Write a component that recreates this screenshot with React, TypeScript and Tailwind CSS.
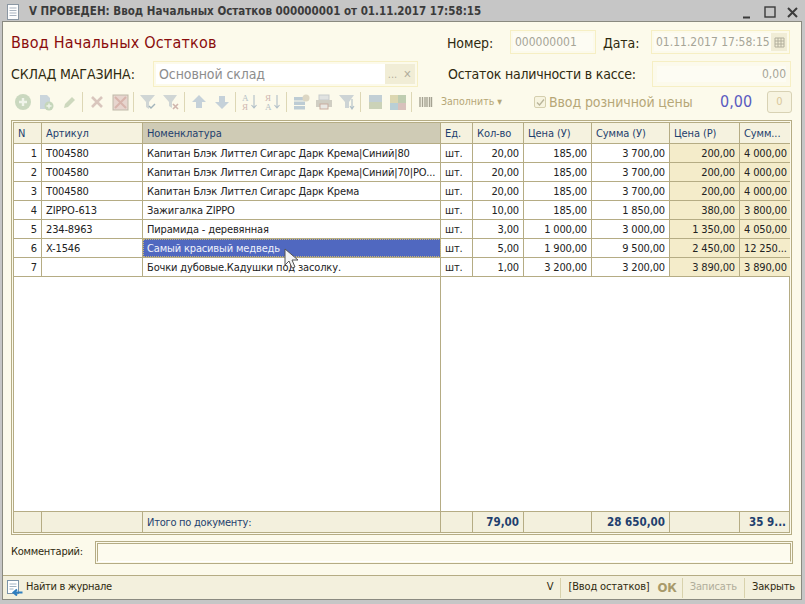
import React from "react";

const font = { fontFamily: '"DejaVu Sans Condensed", "DejaVu Sans", sans-serif' };

const cols = [
  { w: "w-[28px]", name: "N", align: "text-right" },
  { w: "w-[101px]", name: "Артикул", align: "text-left" },
  { w: "w-[298px]", name: "Номенклатура", align: "text-left" },
  { w: "w-[32px]", name: "Ед.", align: "text-left" },
  { w: "w-[51px]", name: "Кол-во", align: "text-right" },
  { w: "w-[68px]", name: "Цена (У)", align: "text-right" },
  { w: "w-[78px]", name: "Сумма (У)", align: "text-right" },
  { w: "w-[70px]", name: "Цена (Р)", align: "text-right" },
  { w: "w-[50px]", name: "Сумм...", align: "text-right" },
];

const rows = [
  ["1", "T004580", "Капитан Блэк Литтел Сигарс Дарк Крема|Синий|80", "шт.", "20,00", "185,00", "3 700,00", "200,00", "4 000,00"],
  ["2", "T004580", "Капитан Блэк Литтел Сигарс Дарк Крема|Синий|70|РО...", "шт.", "20,00", "185,00", "3 700,00", "200,00", "4 000,00"],
  ["3", "T004580", "Капитан Блэк Литтел Сигарс Дарк Крема", "шт.", "20,00", "185,00", "3 700,00", "200,00", "4 000,00"],
  ["4", "ZIPPO-613", "Зажигалка ZIPPO", "шт.", "10,00", "185,00", "1 850,00", "380,00", "3 800,00"],
  ["5", "234-8963", "Пирамида - деревянная", "шт.", "3,00", "1 000,00", "3 000,00", "1 350,00", "4 050,00"],
  ["6", "X-1546", "Самый красивый медведь", "шт.", "5,00", "1 900,00", "9 500,00", "2 450,00", "12 250..."],
  ["7", "", "Бочки дубовые.Кадушки под засолку.", "шт.", "1,00", "3 200,00", "3 200,00", "3 890,00", "3 890,00"],
];

const totals = ["", "", "Итого по документу:", "", "79,00", "", "28 650,00", "", "35 9..."];

const Sep = () => <div className="w-px h-[20px] bg-[#d8d2ac] mx-[2px] shrink-0" />;

const Ic = ({ children }: { children: React.ReactNode }) => (
  <svg width="20" height="18" viewBox="0 0 20 18" className="shrink-0 mx-[1.5px]">
    {children}
  </svg>
);

const Tools = () => (
  <div className="flex items-center h-[22px] pl-[8px] shrink-0 opacity-85">
    <Ic><circle cx="10" cy="9" r="8" fill="#c2d3b8" /><path d="M10 5v8M6 9h8" stroke="#eef3ea" strokeWidth="2.4" /></Ic>
    <Ic>
      <path d="M4 2h7l3 3v11H4z" fill="#c3d0da" />
      <circle cx="13" cy="13" r="4.5" fill="#bcd0b2" />
      <path d="M13 10.5v5M10.5 13h5" stroke="#eef3ea" strokeWidth="1.4" />
    </Ic>
    <Ic><path d="M5 15l1-4 7-7 3 3-7 7z" fill="#c5d3b6" /></Ic>
    <Sep />
    <Ic><path d="M5 4l10 10M15 4L5 14" stroke="#d4bdb6" strokeWidth="2.6" /></Ic>
    <Ic><rect x="3" y="2" width="15" height="15" fill="#e4cfc9" stroke="#b5b0a0" /><path d="M5 4l11 11M16 4L5 15" stroke="#d2a9a2" strokeWidth="2" /></Ic>
    <Sep />
    <Ic>
      <path d="M2 2h15l-6 7v7l-3-2V9z" fill="#c9d0d2" />
      <path d="M11 13l2 2 4-4" stroke="#93a8b2" strokeWidth="1.4" fill="none" />
    </Ic>
    <Ic>
      <path d="M2 2h14l-5 7v6l-3-2V9z" fill="#c9d0d2" />
      <path d="M12 11l5 5M17 11l-5 5" stroke="#c9aaa3" strokeWidth="1.6" />
    </Ic>
    <Sep />
    <Ic><path d="M10 2l7 7h-4v6H7V9H3z" fill="#bccbd6" /></Ic>
    <Ic><path d="M10 16l7-7h-4V3H7v6H3z" fill="#bccbd6" /></Ic>
    <Sep />
    <Ic>
      <text x="2" y="8" fontSize="9" fontFamily="Liberation Serif" fill="#a9b6c0">А</text>
      <text x="2" y="17" fontSize="9" fontFamily="Liberation Serif" fill="#c8aaa5">Я</text>
      <path d="M14 2v13M11.5 12l2.5 3 2.5-3" stroke="#a3b5c2" strokeWidth="1.1" fill="none" />
    </Ic>
    <Ic>
      <text x="2" y="8" fontSize="9" fontFamily="Liberation Serif" fill="#c8aaa5">Я</text>
      <text x="2" y="17" fontSize="9" fontFamily="Liberation Serif" fill="#a9b6c0">А</text>
      <path d="M14 2v13M11.5 12l2.5 3 2.5-3" stroke="#a3b5c2" strokeWidth="1.1" fill="none" />
    </Ic>
    <Sep />
    <Ic>
      <rect x="3" y="4" width="11" height="3.5" fill="#b3c4d0" />
      <rect x="3" y="8.5" width="11" height="3.5" fill="#b3c4d0" />
      <rect x="3" y="13" width="11" height="3.5" fill="#b3c4d0" />
      <circle cx="15" cy="5" r="3.5" fill="#d8d2bd" />
    </Ic>
    <Ic>
      <rect x="5" y="2" width="10" height="5" fill="#dde0e0" stroke="#bfc5c8" />
      <rect x="2" y="7" width="16" height="7" fill="#c9c7bd" />
      <rect x="6" y="11" width="8" height="5" fill="#e6e6e2" stroke="#c09f92" />
    </Ic>
    <Ic>
      <path d="M2 2h15l-5 7v6H8V9z" fill="#c5ced2" />
      <path d="M15 6v10M13 13l2 3 2-3" stroke="#a3b5c2" strokeWidth="1.1" fill="none" />
    </Ic>
    <Sep />
    <Ic>
      <rect x="4" y="2" width="13" height="7" fill="#b9c8d2" />
      <rect x="4" y="9" width="13" height="7" fill="#c3ccb0" />
    </Ic>
    <Ic>
      <rect x="2" y="2" width="8" height="8" fill="#d7d2a8" />
      <rect x="10" y="2" width="8" height="8" fill="#b5c6a8" />
      <rect x="2" y="10" width="8" height="7" fill="#aec8d2" />
      <rect x="10" y="10" width="8" height="7" fill="#d2b8b4" />
    </Ic>
    <Sep />
  </div>
);

const Field = ({ className, children }: { className: string; children?: React.ReactNode }) => (
  <div className={`border border-[#f6efc4] p-[2px] flex shrink-0 ${className}`}>{children}</div>
);

export default function App() {
  return (
    <div style={font} className="w-[805px] h-[604px] bg-[#c6c6c6] flex flex-col overflow-hidden text-[11px] text-[#2f2a10]">
      <div className="h-[21px] flex items-center shrink-0 pl-[7px] pr-[6px] pt-[3px]">
        <svg width="12" height="16" viewBox="0 0 12 16" className="shrink-0">
          <rect x="0.5" y="0.5" width="11" height="15" fill="#fdfdfd" stroke="#8b97a3" />
          <path d="M2.5 4h7M2.5 6.5h7M2.5 9h7M2.5 11.5h7" stroke="#a9b3bf" />
        </svg>
        <span className="ml-[10px] font-bold text-[11.5px] text-[#3b3b3b] whitespace-nowrap">V ПРОВЕДЕН: Ввод Начальных Остатков 000000001 от 01.11.2017 17:58:15</span>
        <div className="ml-auto flex items-center gap-[9px]">
          <svg width="13" height="13" viewBox="0 0 13 13"><path d="M1 11.5h7" stroke="#3b3b3b" strokeWidth="2" /></svg>
          <svg width="13" height="13" viewBox="0 0 13 13"><rect x="1" y="1" width="10" height="10" fill="none" stroke="#3b3b3b" strokeWidth="1.4" /></svg>
          <svg width="13" height="13" viewBox="0 0 13 13"><path d="M2 2l9 9M11 2l-9 9" stroke="#3b3b3b" strokeWidth="2" /></svg>
        </div>
      </div>

      <div className="ml-[2px] mr-[3px] h-[579px] shrink-0 bg-[#fcfaeb] border border-[#8a8a80] flex flex-col">
        <div className="flex items-start pl-[8px] pt-[8px] h-[38px] shrink-0">
          <div className="text-[16px] tracking-[0.2px] leading-[26px] text-[#8a0d0d] w-[436px] shrink-0 whitespace-nowrap">Ввод Начальных Остатков</div>
          <div className="text-[14px] tracking-[-0.1px] leading-[26px] w-[63px] shrink-0">Номер:</div>
          <Field className="w-[86px] h-[24px]">
            <div className="flex-1 bg-[#fdfcf3] text-[12px] leading-[18px] text-[#a6a597] pl-[2px]">000000001</div>
          </Field>
          <div className="text-[14px] tracking-[-0.1px] leading-[26px] w-[55px] shrink-0 pl-[7px]">Дата:</div>
          <Field className="w-[139px] h-[24px]">
            <div className="flex-1 bg-[#fdfcf3] text-[12px] leading-[18px] text-[#a6a597] pl-[2px] whitespace-nowrap">01.11.2017 17:58:15</div>
            <div className="w-[16px] flex items-center justify-center bg-[#f1edd6]">
              <svg width="11" height="11" viewBox="0 0 11 11"><path d="M1 1h9v9H1zM1 4h9M1 7h9M4 1v9M7 1v9" fill="none" stroke="#b1ae9c" /></svg>
            </div>
          </Field>
        </div>

        <div className="flex items-center pl-[8px] h-[28px] shrink-0">
          <div className="text-[14px] tracking-[-0.1px] w-[142px] shrink-0 whitespace-nowrap">СКЛАД МАГАЗИНА:</div>
          <Field className="w-[265px] h-[26px]">
            <div className="flex-1 bg-white text-[14px] tracking-[-0.1px] leading-[20px] text-[#8d8d8d] pl-[3px]">Основной склад</div>
            <div className="w-[15px] text-[#b1ae9c] text-center leading-[22px] bg-[#f1edd6]">...</div>
            <div className="w-[15px] text-[#b1ae9c] text-center leading-[22px] bg-[#f1edd6]">✕</div>
          </Field>
          <div className="text-[14px] tracking-[-0.2px] w-[234px] shrink-0 pl-[30px] whitespace-nowrap">Остаток наличности в кассе:</div>
          <Field className="w-[139px] h-[26px]">
            <div className="flex-1 bg-[#fdfcf3] border-2 border-[#fcfaeb] text-[12px] leading-[16px] text-[#a6a597] text-right">0,00</div>
          </Field>
        </div>

        <div className="flex items-center h-[26px] shrink-0 mt-[1px]">
          <Tools />
          <svg width="14" height="12" viewBox="0 0 14 12" className="shrink-0 ml-[5px]"><path d="M1 1v10M3.5 1v10M6 1v10M8 1v10M10.5 1v10M12.5 1v10" stroke="#a5a292" strokeWidth="1.4" /></svg>
          <span className="text-[#b6a777] ml-[8px] w-[70px] shrink-0 whitespace-nowrap text-[10.5px]">Заполнить ▾</span>
          <div className="w-[12px] h-[12px] ml-[23px] border border-[#d5cfae] rounded-[2px] bg-[#f7f4e0] flex items-center justify-center shrink-0">
            <svg width="9" height="9" viewBox="0 0 9 9"><path d="M1 4.5l2.5 2.5L8 1.5" stroke="#b9b49a" strokeWidth="1.3" fill="none" /></svg>
          </div>
          <span className="text-[14px] tracking-[-0.1px] text-[#b6a777] ml-[3px] w-[171px] shrink-0 whitespace-nowrap">Ввод розничной цены</span>
          <span className="text-[16px] text-[#5a5bc0] w-[47px] shrink-0">0,00</span>
          <div className="w-[25px] h-[22px] border border-[#d8d2b4] rounded-[3px] bg-[#f7f4e1] text-[#d9c79a] flex items-center justify-center shrink-0">0</div>
        </div>

        <div className="mt-[5px] ml-[8px] w-[781px] h-[415px] shrink-0 border border-[#b5ac84] p-px flex flex-col">
          <div className="flex-1 border border-[#b5ac84] flex flex-col bg-white min-h-0">
            <div className="flex h-[21px] shrink-0 border-b border-[#b5ac84]">
              {cols.map((c, i) => (
                <div key={c.name} className={`${c.w} shrink-0 border-r border-[#b5ac84] last:border-r-0 px-[4px] pt-px leading-[20px] tracking-[-0.1px] text-[#1f3f6e] whitespace-nowrap ${i === 2 ? "bg-[#cfcbb5]" : "bg-[#f5f2df]"}`}>
                  {c.name}
                </div>
              ))}
            </div>
            {rows.map((r) => (
              <div key={r[0]} className="flex h-[19px] shrink-0 border-b border-[#b5ac84]">
                {r.map((v, i) => (
                  <div
                    key={i}
                    className={`${cols[i].w} shrink-0 border-r border-[#b5ac84] last:border-r-0 px-[4px] pt-px leading-[17px] tracking-[-0.15px] whitespace-nowrap overflow-hidden text-[#222] ${cols[i].align} ${i >= 7 ? "bg-[#f4ecca]" : ""} ${i === 2 && r[0] === "6" ? "bg-[#5068c0] text-[#f1f3fb] outline-1 outline-dotted outline-[#c9b77a] -outline-offset-1" : ""}`}
                  >
                    {v}
                  </div>
                ))}
              </div>
            ))}
            <div className="flex-1 min-h-0 flex">
              <div className="w-[427px] border-r border-[#b5ac84]" />
            </div>
            <div className="flex h-[21px] shrink-0 border-t border-[#b5ac84] bg-[#f3f0dd]">
              {totals.map((v, i) => (
                <div key={i} className={`${cols[i].w} shrink-0 border-r border-[#b5ac84] last:border-r-0 px-[4px] pt-px leading-[19px] whitespace-nowrap text-[#1f3f6e] ${cols[i].align} ${i > 2 ? "font-bold text-[11.5px]" : "tracking-[-0.25px]"}`}>
                  {v}
                </div>
              ))}
            </div>
          </div>
        </div>

        <div className="flex items-center h-[23px] mt-[6px] shrink-0 pl-[8px]">
          <div className="w-[84px] shrink-0 tracking-[-0.25px]">Комментарий:</div>
          <div className="w-[698px] h-[23px] border border-[#b5ac84] p-px shrink-0">
            <div className="h-full border border-[#b5ac84] bg-[#fdfbee] border-b-white" />
          </div>
        </div>

        <div className="mt-[11px] flex-1 border-t border-[#b5ac84] bg-[#f3f0dd] flex items-center pl-[4px] pr-[6px] tracking-[-0.15px]">
          <svg width="16" height="16" viewBox="0 0 16 16" className="shrink-0">
            <rect x="0.5" y="0.5" width="11" height="13" fill="#fff" stroke="#7b93a8" />
            <path d="M2.5 4h7M2.5 6.5h7M2.5 9h4" stroke="#9fb2c2" />
            <path d="M15.5 12.5H7M10 9.5l-3.5 3 3.5 3" stroke="#2f7fc0" strokeWidth="2" fill="none" />
          </svg>
          <span className="ml-[3px] whitespace-nowrap tracking-[-0.3px]">Найти в журнале</span>
          <div className="ml-auto flex items-center h-full whitespace-nowrap">
            <span>V</span>
            <div className="w-px h-[20px] bg-[#d8d2ac] mx-[7px]" />
            <span>[Ввод остатков]</span>
            <span className="font-bold text-[13px] text-[#a89a6b] ml-[8px]">ОК</span>
            <div className="w-px h-[20px] bg-[#d8d2ac] ml-[5px] mr-[7px]" />
            <span className="text-[#b0ad9a]">Записать</span>
            <div className="w-px h-[20px] bg-[#d8d2ac] mx-[7px]" />
            <span>Закрыть</span>
          </div>
        </div>
      </div>

      <svg width="16" height="22" viewBox="0 0 16 22" className="absolute left-[284px] top-[248px]">
        <path d="M1 1v16l4-4 3 7 3-1-3-7h6z" fill="#f4f4f4" stroke="#555" strokeWidth="1" />
      </svg>
    </div>
  );
}
